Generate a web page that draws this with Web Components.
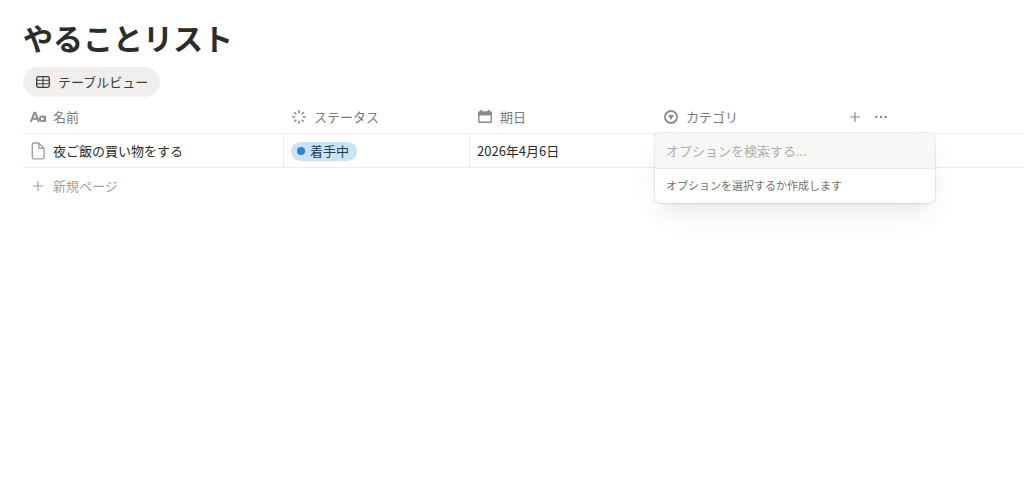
<!DOCTYPE html>
<html lang="ja">
<head>
<meta charset="UTF-8">
<meta name="viewport" content="width=device-width, initial-scale=1">
<title>やることリスト</title>
<style>
    body {
        margin: 0;
        min-height: 100vh;
        background: #fff;
        color: #2c2c2b;
        font-family: "Noto Sans CJK JP", sans-serif;
        font-size: 13px;
        line-height: 20px;
    }
</style>
</head>
<body>
<todo-page>
    <span slot="title">やることリスト</span>
    <view-tab slot="views" icon="table">テーブルビュー</view-tab>
    <todo-table></todo-table>
</todo-page>

<script>
const ICONS = {
    table: `<rect x="1.7" y="2.7" width="12.6" height="10.6" rx="1.8" fill="none" stroke="currentColor" stroke-width="1.3"/>
        <path d="M2 6.2h12M2 9.8h12M8 3v10" fill="none" stroke="currentColor" stroke-width="1.1"/>`,
    title: `<path d="M.9 12.9 4.3 3.7h1L8.7 12.9M2.4 9.8h4.8" fill="none" stroke="currentColor" stroke-width="1.9"/>
        <circle cx="12.3" cy="9.8" r="2.4" fill="none" stroke="currentColor" stroke-width="1.8"/>
        <path d="M15.2 6.6v6.4" stroke="currentColor" stroke-width="1.8"/>`,
    status: `<path d="M8 1.2v3M8 11.8v3M1.2 8h3M11.8 8h3M3.2 3.2l2.1 2.1M10.7 10.7l2.1 2.1M3.2 12.8l2.1-2.1M10.7 5.3l2.1-2.1" stroke="currentColor" stroke-width="1.6"/>`,
    date: `<path fill-rule="evenodd" fill="currentColor" d="M3.4.8h1.9v1.4h5.4V.8h1.9v1.4h.9A1.5 1.5 0 0 1 15 3.7v8.8a1.5 1.5 0 0 1-1.5 1.5h-11A1.5 1.5 0 0 1 1 12.5V3.7a1.5 1.5 0 0 1 1.5-1.5h.9zM2.5 6.6v5.9h11V6.6z"/>`,
    select: `<circle cx="8" cy="8" r="6" fill="none" stroke="currentColor" stroke-width="1.8"/>
        <path d="M5 5.9h6L8 11z" fill="currentColor"/>`,
    plus: `<path d="M8 3v10M3 8h10" stroke="currentColor" stroke-width="1.2"/>`,
    more: `<g fill="currentColor"><circle cx="3.3" cy="8" r="1.2"/><circle cx="8" cy="8" r="1.2"/><circle cx="12.7" cy="8" r="1.2"/></g>`,
    page: `<path d="M4 0h4.8L14.2 5.4v8.8a1.7 1.7 0 0 1-1.7 1.7H4a1.7 1.7 0 0 1-1.7-1.7V1.7A1.7 1.7 0 0 1 4 0zM8.8.2v3.8a1.3 1.3 0 0 0 1.3 1.3h4" fill="none" stroke="currentColor" stroke-width="1.4" stroke-linejoin="round"/>`
};

class UiIcon extends HTMLElement {
    connectedCallback() {
        this.attachShadow({ mode: 'open' });
        this.shadowRoot.innerHTML = `
            <style>
                :host {
                    display: block;
                    flex: none;
                    width: 16px;
                    height: 16px;
                }

                svg {
                    display: block;
                    overflow: visible;
                }
            </style>
            <svg width="16" height="16" viewBox="0 0 16 16" aria-hidden="true">${ICONS[this.getAttribute('name')]}</svg>
        `;
    }
}

class TodoPage extends HTMLElement {
    connectedCallback() {
        this.attachShadow({ mode: 'open' });
        this.shadowRoot.innerHTML = `
            <style>
                :host {
                    display: block;
                    padding: 17px 0 0 23px;
                }

                h1 {
                    margin: 0 0 10px;
                    font-size: 30px;
                    font-weight: 700;
                    line-height: 40px;
                }

                nav {
                    display: flex;
                    margin-bottom: 4px;
                }
            </style>
            <h1><slot name="title"></slot></h1>
            <nav><slot name="views"></slot></nav>
            <slot></slot>
        `;
    }
}

class ViewTab extends HTMLElement {
    connectedCallback() {
        this.attachShadow({ mode: 'open' });
        this.shadowRoot.innerHTML = `
            <style>
                :host {
                    display: block;
                }

                button {
                    display: flex;
                    align-items: center;
                    gap: 7px;
                    height: 30px;
                    padding: 0 12px;
                    border: 0;
                    border-radius: 15px;
                    background: #f0efed;
                    color: #3d3c39;
                    font: inherit;
                    cursor: pointer;
                }
            </style>
            <button type="button"><ui-icon name="${this.getAttribute('icon')}"></ui-icon><slot></slot></button>
        `;
    }
}

class ColumnLabel extends HTMLElement {
    connectedCallback() {
        this.attachShadow({ mode: 'open' });
        this.shadowRoot.innerHTML = `
            <style>
                :host {
                    display: flex;
                    align-items: center;
                    gap: 7px;
                    padding: 0 7px;
                }

                ui-icon {
                    color: #8e8b86;
                }
            </style>
            <ui-icon name="${this.getAttribute('icon')}"></ui-icon><slot></slot>
        `;
    }
}

class StatusTag extends HTMLElement {
    connectedCallback() {
        this.attachShadow({ mode: 'open' });
        this.shadowRoot.innerHTML = `
            <style>
                :host {
                    display: inline-flex;
                    align-items: center;
                    gap: 5px;
                    height: 19px;
                    padding: 0 8px 0 6px;
                    border-radius: 10px;
                    background: #cae3f7;
                    color: #1c3d5c;
                    vertical-align: middle;
                }

                .dot {
                    width: 8px;
                    height: 8px;
                    border-radius: 50%;
                    background: #2783de;
                }
            </style>
            <span class="dot"></span><slot></slot>
        `;
    }
}

class OptionPicker extends HTMLElement {
    connectedCallback() {
        this.attachShadow({ mode: 'open' });
        this.shadowRoot.innerHTML = `
            <style>
                :host {
                    display: block;
                    box-sizing: border-box;
                    width: 280px;
                    overflow: hidden;
                    border-radius: 6px;
                    background: #fff;
                    box-shadow: 0 0 0 1px rgba(42, 28, 0, 0.07), 0 14px 28px -6px rgba(0, 0, 0, 0.1), 0 2px 4px -1px rgba(0, 0, 0, 0.05);
                }

                input {
                    display: block;
                    box-sizing: border-box;
                    width: 100%;
                    height: 36px;
                    padding: 0 11px;
                    border: 0;
                    border-bottom: 1px solid #e9e8e6;
                    outline: 0;
                    background: #f7f7f5;
                    color: #2c2c2b;
                    font: inherit;
                }

                input::placeholder {
                    color: #b0aeaa;
                    opacity: 1;
                }

                p {
                    margin: 0;
                    padding: 6px 11px 8px;
                    color: #73716c;
                    font-size: 11px;
                    line-height: 20px;
                }
            </style>
            <input type="text" placeholder="オプションを検索する..." aria-label="オプションを検索する">
            <p><slot></slot></p>
        `;
    }
}

class TodoTable extends HTMLElement {
    connectedCallback() {
        this.attachShadow({ mode: 'open' });
        this.shadowRoot.innerHTML = `
            <style>
                :host {
                    display: block;
                }

                table {
                    width: 100%;
                    table-layout: fixed;
                    border-collapse: separate;
                    border-spacing: 0;
                }

                .name {
                    width: 261px;
                }

                .property {
                    width: 186px;
                }

                th, td {
                    box-sizing: border-box;
                    height: 34px;
                    padding: 0;
                    border-bottom: 1px solid #ececea;
                    text-align: left;
                    white-space: nowrap;
                }

                th {
                    height: 33px;
                    color: #7d7a75;
                    font-weight: 400;
                }

                td {
                    padding: 0 7px;
                    border-right: 1px solid #ececea;
                }

                td.category, td.rest {
                    border-right: 0;
                }

                td.category {
                    position: relative;
                }

                .page-name {
                    display: flex;
                    align-items: center;
                    gap: 7px;
                }

                .page-name ui-icon {
                    color: #a5a29d;
                }

                .actions {
                    display: flex;
                }

                button {
                    display: flex;
                    align-items: center;
                    justify-content: center;
                    height: 26px;
                    padding: 0;
                    border: 0;
                    background: none;
                    color: #8e8b86;
                    font: inherit;
                    cursor: pointer;
                }

                .actions button {
                    width: 26px;
                }

                .new-page {
                    justify-content: flex-start;
                    gap: 7px;
                    width: 100%;
                    height: 36px;
                    padding: 0 7px;
                    color: #a5a29d;
                }

                option-picker {
                    position: absolute;
                    top: -1px;
                    left: -1px;
                    z-index: 1;
                }
            </style>
            <table>
                <colgroup>
                    <col class="name">
                    <col class="property">
                    <col class="property">
                    <col class="property">
                    <col>
                </colgroup>
                <thead>
                    <tr>
                        <th scope="col"><column-label icon="title">名前</column-label></th>
                        <th scope="col"><column-label icon="status">ステータス</column-label></th>
                        <th scope="col"><column-label icon="date">期日</column-label></th>
                        <th scope="col"><column-label icon="select">カテゴリ</column-label></th>
                        <th>
                            <div class="actions">
                                <button type="button" aria-label="プロパティを追加"><ui-icon name="plus"></ui-icon></button>
                                <button type="button" aria-label="その他"><ui-icon name="more"></ui-icon></button>
                            </div>
                        </th>
                    </tr>
                </thead>
                <tbody>
                    <tr>
                        <td><div class="page-name"><ui-icon name="page"></ui-icon>夜ご飯の買い物をする</div></td>
                        <td><status-tag>着手中</status-tag></td>
                        <td>2026年4月6日</td>
                        <td class="category"><option-picker>オプションを選択するか作成します</option-picker></td>
                        <td class="rest"></td>
                    </tr>
                </tbody>
            </table>
            <button type="button" class="new-page"><ui-icon name="plus"></ui-icon>新規ページ</button>
        `;
    }
}

customElements.define('ui-icon', UiIcon);
customElements.define('column-label', ColumnLabel);
customElements.define('status-tag', StatusTag);
customElements.define('option-picker', OptionPicker);
customElements.define('view-tab', ViewTab);
customElements.define('todo-table', TodoTable);
customElements.define('todo-page', TodoPage);
</script>
</body>
</html>
